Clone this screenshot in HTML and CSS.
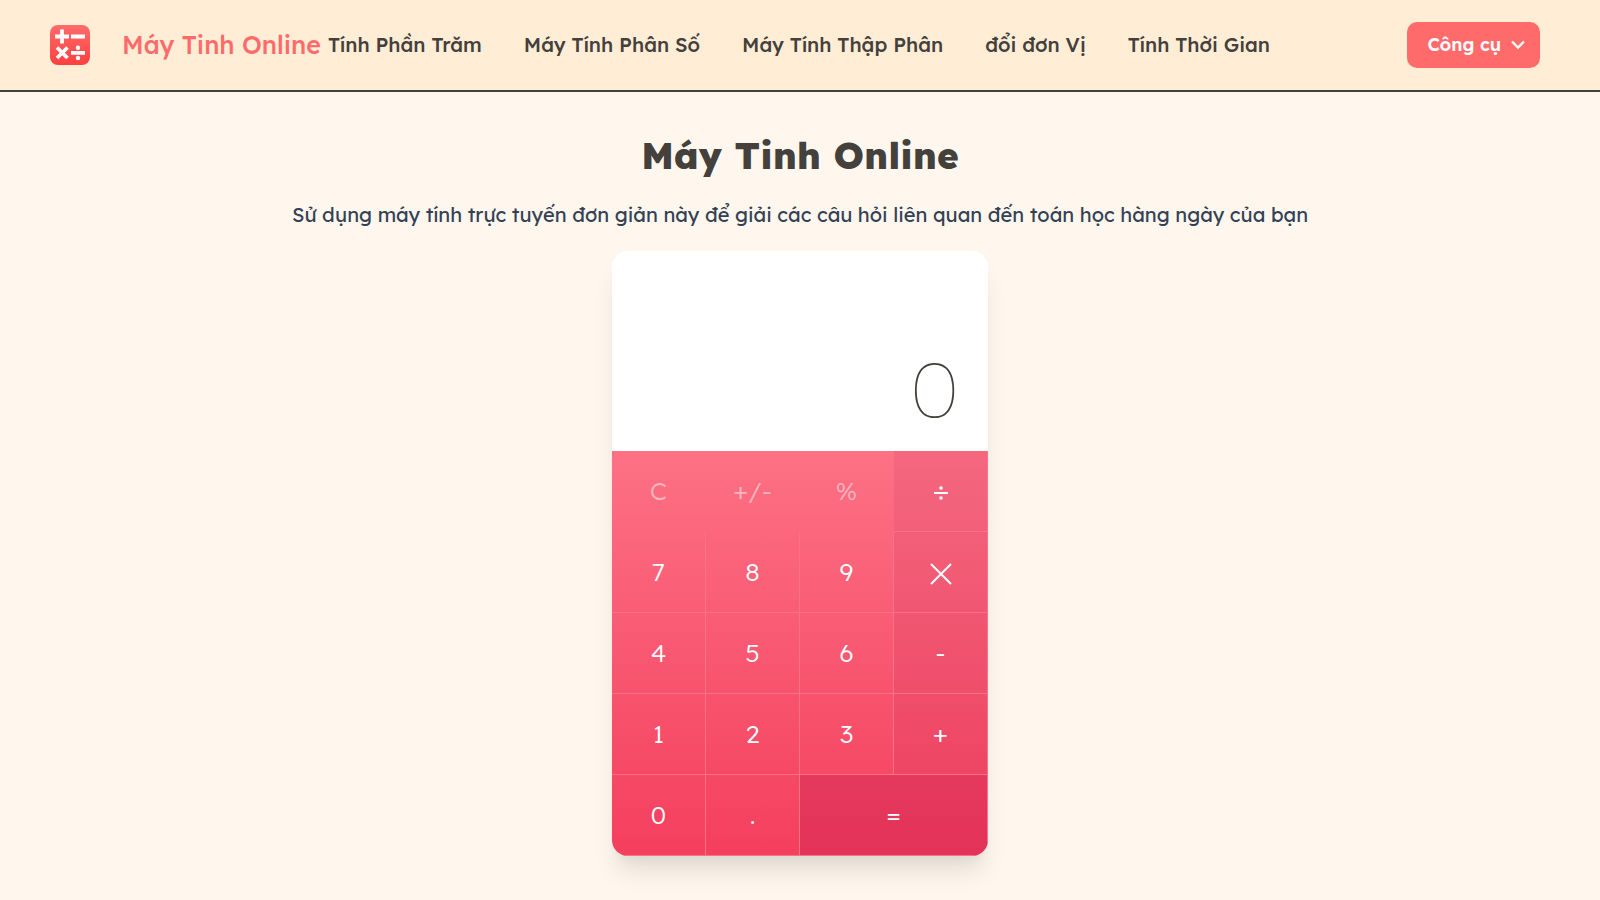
FILE: index.html
```html
<!DOCTYPE html>
<html lang="vi">
<head>
<meta charset="utf-8">
<meta name="viewport" content="width=device-width, initial-scale=1">
<title>Máy Tinh Online</title>
<link rel="stylesheet" href="styles.css">
</head>
<body>
<header class="header">
  <a class="brand" href="#">
    <svg class="logo" viewBox="0 0 40 40" aria-hidden="true">
      <defs>
        <linearGradient id="logo-fill" x1="0" y1="0" x2="0" y2="1">
          <stop offset="0" stop-color="#ff6b6b"/>
          <stop offset="1" stop-color="#ff4040"/>
        </linearGradient>
      </defs>
      <rect width="40" height="40" rx="8" fill="url(#logo-fill)"/>
      <g stroke="#fff" stroke-width="3.8" fill="none">
        <path d="M5 11.500h14M12 4.500v14M21 11.500h14M21 27.800h14"/>
        <path d="M7 22.500l10.500 10.500M17.500 22.500l-10.500 10.500"/>
      </g>
      <circle cx="28" cy="22.800" r="2.200" fill="#fff"/>
      <circle cx="28" cy="33" r="2.200" fill="#fff"/>
    </svg>
    <span class="brand-name">Máy Tinh Online</span>
  </a>
  <nav class="nav">
    <a href="#">Tính Phần Trăm</a>
    <a href="#">Máy Tính Phân Số</a>
    <a href="#">Máy Tính Thập Phân</a>
    <a href="#">đổi đơn Vị</a>
    <a href="#">Tính Thời Gian</a>
  </nav>
  <button class="tools" type="button">Công cụ
    <svg class="chevron" viewBox="0 0 14 10" aria-hidden="true"><path d="M1 1.500l6 6 6-6"/></svg>
  </button>
</header>
<main class="main">
  <h1 class="title">Máy Tinh Online</h1>
  <p class="intro">Sử dụng máy tính trực tuyến đơn giản này để giải các câu hỏi liên quan đến toán học hàng ngày của bạn</p>
  <section class="calculator" aria-label="Máy tính">
    <output class="display">0</output>
    <div class="keys">
      <button class="key muted" type="button">C</button>
      <button class="key muted" type="button">+/-</button>
      <button class="key muted" type="button">%</button>
      <button class="key operator" type="button" aria-label="Chia">
        <svg class="divide" viewBox="0 0 16 16" aria-hidden="true"><path d="M1 8h14"/><circle cx="8" cy="3" r="1.800"/><circle cx="8" cy="13" r="1.800"/></svg>
      </button>
      <button class="key" type="button">7</button>
      <button class="key" type="button">8</button>
      <button class="key" type="button">9</button>
      <button class="key operator" type="button" aria-label="Nhân">
        <svg class="times" viewBox="0 0 22 22" aria-hidden="true"><path d="M1 1l20 20M21 1l-20 20"/></svg>
      </button>
      <button class="key" type="button">4</button>
      <button class="key" type="button">5</button>
      <button class="key" type="button">6</button>
      <button class="key operator" type="button">-</button>
      <button class="key" type="button">1</button>
      <button class="key" type="button">2</button>
      <button class="key" type="button">3</button>
      <button class="key operator" type="button">+</button>
      <button class="key" type="button">0</button>
      <button class="key" type="button">.</button>
      <button class="key equals" type="button">=</button>
    </div>
  </section>
</main>
</body>
</html>
```
FILE: styles.css
```css
* {
  box-sizing: border-box;
}

body {
  margin: 0;
  min-height: 100vh;
  background: #fff7ed;
  color: #44403c;
  font-family: Lexend, Inter, "Noto Sans", sans-serif;
}

.header {
  display: flex;
  align-items: center;
  padding: 22px 60px 22px 50px;
  background: #ffedd5;
  border-bottom: 2px solid #404040;
}

.brand {
  display: flex;
  align-items: center;
  gap: 32px;
  margin-right: 7px;
  color: #ff6b6b;
  font-size: 25px;
  font-weight: 500;
  line-height: 32px;
  text-decoration: none;
  white-space: nowrap;
}

.logo {
  width: 40px;
  height: 40px;
}

.nav {
  display: flex;
  gap: 42px;
  font-size: 20px;
  font-weight: 500;
  line-height: 28px;
  white-space: nowrap;
}

.nav a {
  color: inherit;
  text-decoration: none;
}

.tools {
  display: flex;
  align-items: center;
  justify-content: space-between;
  gap: 10px;
  margin-left: auto;
  padding: 11px 15px 11px 20px;
  border: 0;
  border-radius: 10px;
  background: #ff6b6b;
  color: #fff;
  font: inherit;
  font-size: 18px;
  font-weight: 600;
  line-height: 24px;
  white-space: nowrap;
}

.chevron {
  width: 14px;
  height: 10px;
  fill: none;
  stroke: #fff;
  stroke-width: 2.4;
}

.main {
  display: flex;
  flex-direction: column;
  align-items: center;
  padding: 40px 16px;
}

.title {
  margin: 0;
  font-size: 37px;
  font-weight: 800;
  line-height: 47px;
}

.intro {
  margin: 20px 0;
  color: #334155;
  font-size: 20px;
  line-height: 32px;
  text-align: center;
}

.calculator {
  width: 100%;
  max-width: 376px;
  overflow: hidden;
  border-radius: 16px;
  background: #fff;
  box-shadow: 0 20px 25px -5px rgba(0, 0, 0, 0.1), 0 10px 10px -5px rgba(0, 0, 0, 0.04);
}

.display {
  display: flex;
  align-items: flex-end;
  justify-content: flex-end;
  height: 200px;
  padding: 16px 30px;
  font-size: 76px;
  font-weight: 100;
  line-height: 92px;
}

.keys {
  display: grid;
  grid-template-columns: repeat(4, 1fr);
  grid-auto-rows: 81px;
  background: linear-gradient(#fd7185, #f43f5e);
}

.key {
  display: flex;
  align-items: center;
  justify-content: center;
  padding: 0 0 2px;
  border: 0;
  border-right: 1px solid #fb7185;
  border-bottom: 1px solid #fb7185;
  background: transparent;
  color: #fff;
  font: inherit;
  font-size: 25px;
  font-weight: 300;
}

.muted {
  border-color: transparent;
  color: rgba(255, 255, 255, 0.5);
}

.operator {
  background: rgba(190, 50, 90, 0.14);
}

.equals {
  grid-column: span 2;
  background: rgba(190, 24, 74, 0.3);
}

.divide,
.times {
  margin-top: 6px;
  stroke: #fff;
  stroke-width: 2;
}

.divide {
  width: 16px;
  height: 16px;
  fill: #fff;
}

.divide circle {
  stroke: none;
}

.times {
  width: 22px;
  height: 22px;
}
```
